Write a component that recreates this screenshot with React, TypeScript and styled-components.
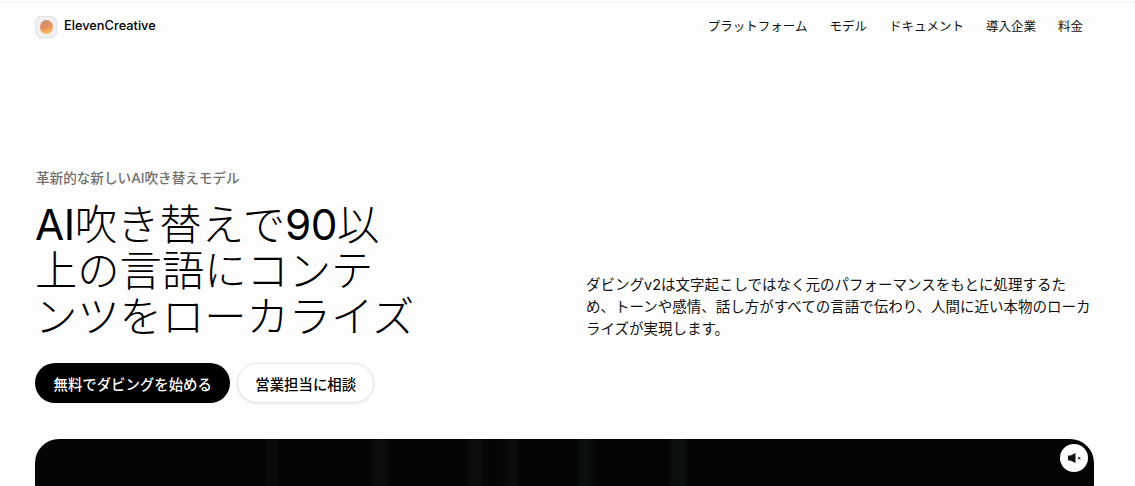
import { createGlobalStyle } from "styled-components";
import styled from "styled-components";

const GlobalStyle = createGlobalStyle`
  * { box-sizing: border-box; margin: 0; padding: 0; }
  html, body { height: 100%; overflow: hidden; background: #fdfdfd; }
  body {
    color: #000;
    font-family: Inter, "Noto Sans CJK JP", sans-serif;
  }
`;

const Page = styled.div`
  display: flex;
  flex-direction: column;
  height: 486px;
  overflow: hidden;
  border-top: 1px solid #f0f0f0;
  margin-top: 2px;
`;

const Header = styled.header`
  display: flex;
  flex: none;
  align-items: center;
  justify-content: space-between;
  height: 47px;
  padding: 0 52px 0 35px;
`;

const Brand = styled.div`
  display: flex;
  align-items: center;
  gap: 7px;
`;

const BrandName = styled.span`
  padding-bottom: 2px;
  font-size: 12.8px;
  font-weight: 500;
`;

const LogoBox = styled.div`
  display: flex;
  align-items: center;
  justify-content: center;
  width: 22px;
  height: 22px;
  background: #f0f0f0;
  border: 1px solid #e3e3e3;
  border-radius: 6px;
`;

const LogoDot = styled.div`
  width: 13px;
  height: 14px;
  border-radius: 50%;
  background: linear-gradient(160deg, #c08f70 5%, #e88f62 50%, #fcc45a 90%);
`;

const Nav = styled.nav`
  display: flex;
  gap: 22px;
  padding-bottom: 2px;
  font-size: 12.5px;
  color: #111;
`;

const Hero = styled.section`
  display: grid;
  flex: none;
  grid-template-columns: 1fr 1fr;
  column-gap: 43px;
  align-items: end;
  padding: 0 41px 0 35px;
  margin-top: 119px;
`;

const Lead = styled.div`
  display: flex;
  flex-direction: column;
`;

const Eyebrow = styled.p`
  padding-left: 1px;
  font-size: 13.6px;
  font-weight: 500;
  line-height: 18px;
  color: #6f6f6f;
`;

const Title = styled.h1`
  margin-top: 15px;
  font-size: 42.3px;
  font-weight: 300;
  line-height: 46px;
`;

const TitleLatin = styled.span`
  font-weight: 400;
  letter-spacing: -0.4px;
`;

const Actions = styled.div`
  display: flex;
  gap: 7px;
  margin-top: 23px;
`;

const Button = styled.button<{ $primary?: boolean }>`
  height: 40px;
  padding: 0 ${(p) => (p.$primary ? "18.5px" : "17px")};
  border-radius: 20px;
  border: ${(p) => (p.$primary ? "none" : "1px solid #e6e6e6")};
  background: ${(p) => (p.$primary ? "#000" : "#fff")};
  color: ${(p) => (p.$primary ? "#fff" : "#000")};
  box-shadow: ${(p) => (p.$primary ? "none" : "0 1px 3px rgba(0,0,0,0.08)")};
  font-family: inherit;
  font-size: 14.4px;
  font-weight: 500;
`;

const Description = styled.p`
  margin-bottom: 63px;
  font-size: 14.5px;
  line-height: 22px;
  color: #111;
`;

const Video = styled.div`
  position: relative;
  flex: none;
  height: 600px;
  margin: 36px 41px 0 35px;
  border-radius: 24px;
  background:
    linear-gradient(90deg,
      transparent 230px, #0a0c0c 233px 241px, transparent 244px,
      transparent 336px, #0b0d0d 340px 350px, transparent 354px,
      transparent 431px, #0b0d0c 435px 445px, transparent 449px,
      transparent 468px, #0a0c0c 472px 481px, transparent 485px,
      transparent 541px, #0b0e0e 545px 555px, transparent 559px,
      transparent 634px, #0b0f10 638px 649px, transparent 653px),
    #050505;
`;

const MuteButton = styled.button`
  position: absolute;
  top: 5px;
  right: 6px;
  display: flex;
  align-items: center;
  justify-content: center;
  width: 28px;
  height: 28px;
  border: none;
  border-radius: 50%;
  background: #fff;
`;

export default function App() {
  return (
    <>
      <GlobalStyle />
      <Page>
        <Header>
          <Brand>
            <LogoBox>
              <LogoDot />
            </LogoBox>
            <BrandName>ElevenCreative</BrandName>
          </Brand>
          <Nav>
            <span>プラットフォーム</span>
            <span>モデル</span>
            <span>ドキュメント</span>
            <span>導入企業</span>
            <span>料金</span>
          </Nav>
        </Header>
        <Hero>
          <Lead>
            <Eyebrow>革新的な新しいAI吹き替えモデル</Eyebrow>
            <Title>
              <TitleLatin>AI</TitleLatin>吹き替えで<TitleLatin>90</TitleLatin>以
              <br />
              上の言語にコンテ
              <br />
              ンツをローカライズ
            </Title>
            <Actions>
              <Button $primary>無料でダビングを始める</Button>
              <Button>営業担当に相談</Button>
            </Actions>
          </Lead>
          <Description>
            ダビングv2は文字起こしではなく元のパフォーマンスをもとに処理するため、トーンや感情、話し方がすべての言語で伝わり、人間に近い本物のローカライズが実現します。
          </Description>
        </Hero>
        <Video>
          <MuteButton aria-label="ミュート解除">
            <svg width="14" height="14" viewBox="0 0 14 14">
              <path d="M1 4.5h2.5L8.5 2v10L3.5 9.5H1z" fill="#111" />
              <path d="M11 6l2.4 2.4M13.4 6L11 8.4" stroke="#111" strokeWidth="1" />
            </svg>
          </MuteButton>
        </Video>
      </Page>
    </>
  );
}
